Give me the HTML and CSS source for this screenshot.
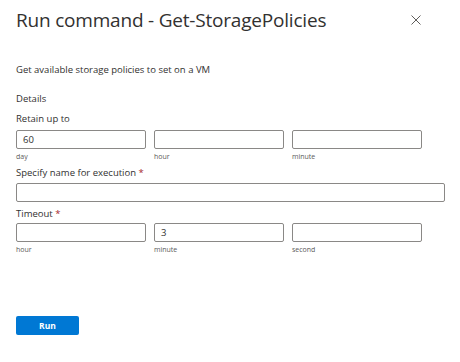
FILE: index.html
```html
<!DOCTYPE html>
<html>
<head>
<meta charset="utf-8">
<link rel="stylesheet" href="styles.css">
</head>
<body>
<div class="panel">
  <div class="header">
    <h1 class="title">Run command - Get-StoragePolicies</h1>
    <svg class="close" width="10" height="10" viewBox="0 0 10 10"><path d="M0.5 0.5 L9.5 9.5 M9.5 0.5 L0.5 9.5" stroke="#605e5c" stroke-width="1" fill="none"/></svg>
  </div>
  <p class="desc">Get available storage policies to set on a VM</p>
  <div class="section">Details</div>
  <div class="label l-retain">Retain up to</div>
  <div class="triple">
    <div class="field"><div class="input">60</div><div class="sub">day</div></div>
    <div class="field"><div class="input"></div><div class="sub">hour</div></div>
    <div class="field"><div class="input"></div><div class="sub">minute</div></div>
  </div>
  <div class="label l-name">Specify name for execution <span class="req">*</span></div>
  <div class="input full"></div>
  <div class="label l-timeout">Timeout <span class="req">*</span></div>
  <div class="triple">
    <div class="field"><div class="input"></div><div class="sub">hour</div></div>
    <div class="field"><div class="input">3</div><div class="sub">minute</div></div>
    <div class="field"><div class="input"></div><div class="sub">second</div></div>
  </div>
  <div class="footer"><button class="run">Run</button></div>
</div>
</body>
</html>
```
FILE: styles.css
```css
html, body {
  margin: 0;
  padding: 0;
  background: #ffffff;
}
body {
  font-family: "Open Sans", "Noto Sans", sans-serif;
  color: #323130;
}
.panel {
  padding: 6px 0 0 16px;
  width: 444px;
  box-sizing: border-box;
}
.header {
  display: flex;
  align-items: center;
  justify-content: space-between;
  height: 28px;
  padding-right: 23px;
}
.title {
  margin: 0;
  font-size: 19px;
  font-weight: 400;
  line-height: 28px;
  letter-spacing: -0.2px;
  color: #323130;
}
.close {
  display: block;
}
.desc {
  margin: 29px 0 0;
  font-size: 9.5px;
  line-height: 14px;
}
.section {
  margin-top: 15px;
  font-size: 9.5px;
  line-height: 14px;
}
.label {
  font-size: 9.5px;
  line-height: 14px;
}
.l-retain { margin-top: 6px; }
.l-name { margin-top: 4px; }
.l-timeout { margin-top: 5px; }
.req { color: #a4262c; }
.triple {
  display: grid;
  grid-template-columns: repeat(3, 130px);
  column-gap: 8px;
  margin-top: 4px;
}
.l-timeout + .triple { margin-top: 2px; }
.input {
  box-sizing: border-box;
  height: 19px;
  border: 1px solid #8a8886;
  border-radius: 2px;
  padding-left: 6px;
  font-size: 9.5px;
  line-height: 17px;
  color: #323130;
}
.full {
  width: 429px;
  margin-top: 3px;
}
.sub {
  margin-top: 3px;
  font-size: 7px;
  line-height: 10px;
  color: #5a5a5a;
}
.footer {
  margin-top: 61px;
}
.run {
  display: block;
  width: 63px;
  height: 19px;
  border: 0;
  border-radius: 2px;
  background: #0078d4;
  color: #ffffff;
  font-family: "Open Sans", "Noto Sans", sans-serif;
  font-weight: 700;
  font-size: 8.5px;
  padding: 0;
}
```
